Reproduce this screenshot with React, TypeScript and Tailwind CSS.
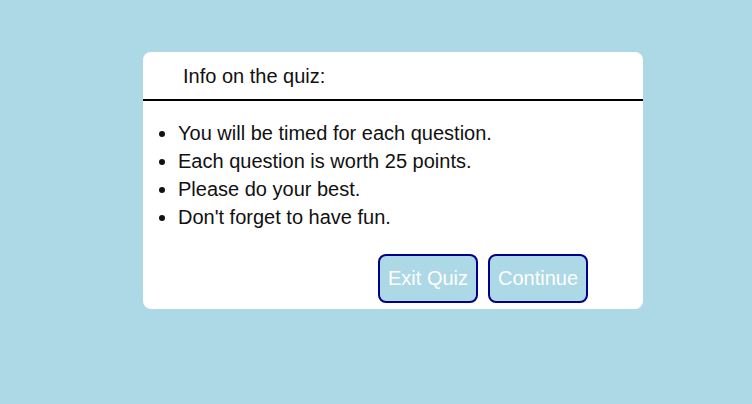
import React from "react";

export default function App() {
  return (
    <div className="w-[752px] h-[404px] bg-[#add8e6] pt-[52px] pl-[143px]" style={{ fontFamily: '"Liberation Sans", Arial, sans-serif' }}>
      <div className="w-[500px] h-[257px] bg-white rounded-[8px] flex flex-col">
        <div className="h-[49px] border-b-2 border-black flex items-center pl-[40px] text-[20px] text-[#111]">
          Info on the quiz:
        </div>
        <ul className="list-disc pl-[35px] mt-[18px] text-[20px] leading-[28px] text-[#111]">
          <li>You will be timed for each question.</li>
          <li>Each question is worth 25 points.</li>
          <li>Please do your best.</li>
          <li>Don't forget to have fun.</li>
        </ul>
        <div className="flex justify-end gap-[10px] pr-[55px] mt-[23px]">
          <button className="w-[100px] h-[49px] pb-[2px] rounded-[8px] border-2 border-[#00008b] bg-[#add8e6] text-white text-[20px]">Exit Quiz</button>
          <button className="w-[100px] h-[49px] pb-[2px] rounded-[8px] border-2 border-[#00008b] bg-[#add8e6] text-white text-[20px]">Continue</button>
        </div>
      </div>
    </div>
  );
}
